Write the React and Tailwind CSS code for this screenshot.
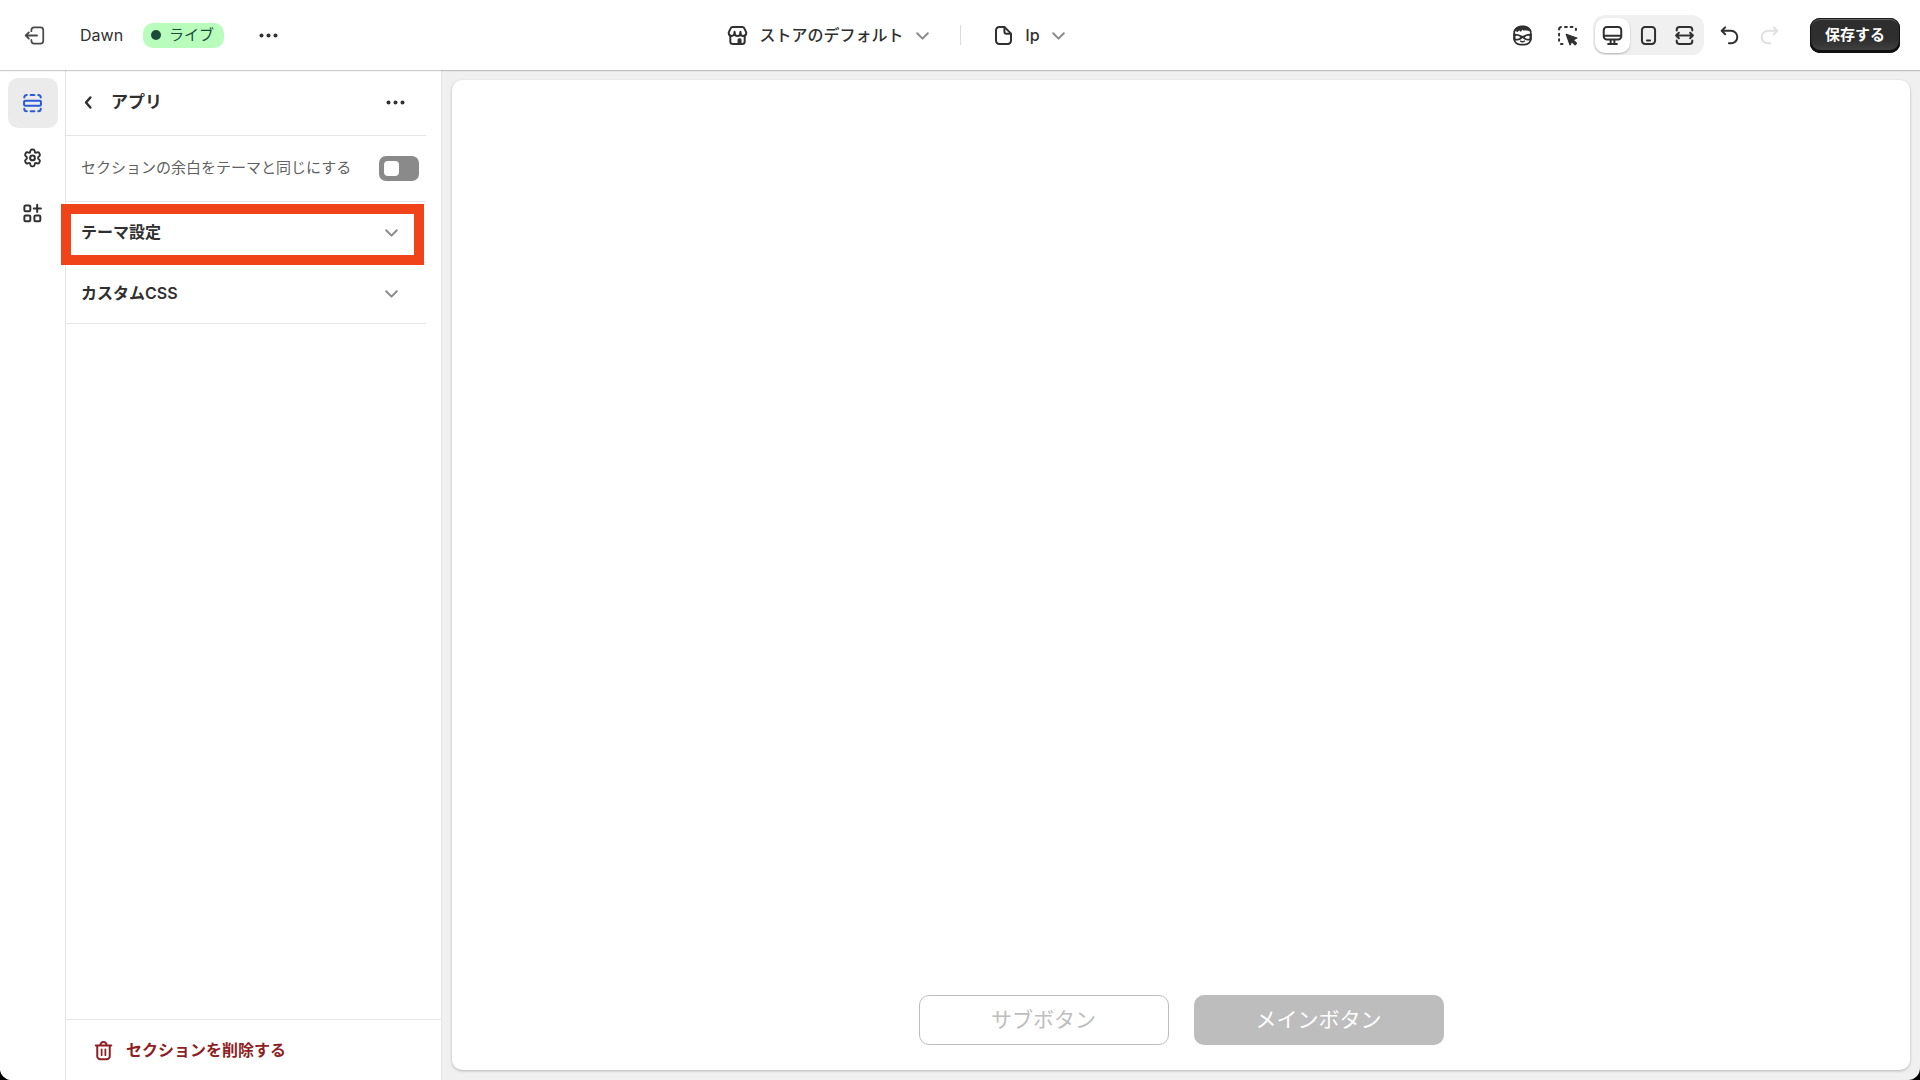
import React, { useState } from 'react';

const Icon = ({ children, className = '' }) => (
    <svg
        viewBox="0 0 20 20"
        className={`w-[25px] h-[25px] shrink-0 ${className}`}
        fill="none"
        stroke="currentColor"
        strokeWidth="1.6"
        strokeLinecap="round"
        strokeLinejoin="round"
        aria-hidden="true"
    >
        {children}
    </svg>
);

const ExitIcon = () => (
    <Icon className="text-[#4a4a4a]">
        <path d="M7.5 6.5V5.75A2.25 2.25 0 0 1 9.750 3.500h5a2.250 2.250 0 0 1 2.250 2.250v8.500a2.250 2.250 0 0 1-2.250 2.250h-5a2.250 2.250 0 0 1-2.250-2.250V13.500" strokeWidth="1.4" />
        <path d="M12 10H3M5.500 7.500 3 10l2.500 2.500" strokeWidth="1.5" />
    </Icon>
);

const DotsIcon = () => (
    <Icon>
        <g fill="currentColor" stroke="none">
            <circle cx="4.400" cy="10" r="1.600" />
            <circle cx="10" cy="10" r="1.600" />
            <circle cx="15.600" cy="10" r="1.600" />
        </g>
    </Icon>
);

const ChevronDown = () => (
    <Icon className="text-[#8a8a8a]">
        <path d="M5.750 8.250 10 12.500l4.250-4.250" />
    </Icon>
);

const ChevronLeft = () => (
    <Icon>
        <path d="M11.500 6 8 10l3.500 4" strokeWidth="2" />
    </Icon>
);

const SectionsIcon = () => (
    <Icon>
        <rect x="3.250" y="7.750" width="13.500" height="4" rx="1" />
        <path d="M3.400 5.250a2 2 0 0 1 2-2M8.500 3.250h3M14.600 3.250a2 2 0 0 1 2 2M3.400 14.250a2 2 0 0 0 2 2M8.500 16.250h3M14.600 16.250a2 2 0 0 0 2-2" />
    </Icon>
);

const GearIcon = () => (
    <Icon>
        <path
            d="M8.300 3.900c.15-.7.650-1.150 1.300-1.150h.8c.65 0 1.150.45 1.300 1.150l.25 1.200c.2.100.4.200.6.350l1.200-.4c.65-.2 1.300.05 1.600.6l.4.700c.35.600.2 1.250-.3 1.700l-.9.850v1.200l.9.850c.5.450.65 1.100.3 1.700l-.4.700c-.3.550-.95.800-1.600.6l-1.200-.4c-.2.150-.4.250-.6.350l-.25 1.200c-.15.700-.65 1.150-1.300 1.150h-.8c-.65 0-1.150-.45-1.300-1.150l-.25-1.200c-.2-.1-.4-.2-.6-.35l-1.200.4c-.65.200-1.300-.05-1.600-.6l-.4-.7c-.35-.6-.2-1.250.3-1.700l.9-.85V8.900l-.9-.85c-.5-.45-.65-1.100-.3-1.700l.4-.7c.3-.55.950-.8 1.600-.6l1.200.4c.2-.15.4-.25.6-.35z"
            strokeWidth="1.500"
        />
        <circle cx="10" cy="9.500" r="1.900" />
    </Icon>
);

const AppsIcon = () => (
    <Icon>
        <rect x="3.500" y="3.500" width="4.750" height="4.750" rx="1" />
        <rect x="3.500" y="11.500" width="4.750" height="4.750" rx="1" />
        <rect x="11.500" y="11.500" width="4.750" height="4.750" rx="1" />
        <path d="M13.750 3v5.750M11 6h5.750" />
    </Icon>
);

const StoreIcon = () => (
    <Icon>
        <path d="M4.250 10v4.750a2 2 0 0 0 2 2h7.500a2 2 0 0 0 2-2V10" />
        <path d="M3 7.500 4.400 4.500A2 2 0 0 1 6.200 3.250h7.600a2 2 0 0 1 1.800 1.250L17 7.500v.5a2.250 2.250 0 0 1-4.650 0 2.350 2.350 0 0 1-4.700 0A2.250 2.250 0 0 1 3 8z" />
        <path d="M7.650 8V7M12.350 8V7" />
        <path d="M10.500 16.500V13.500a.75.75 0 0 1 .75-.75h.75a.75.75 0 0 1 .75.75v3z" fill="currentColor" strokeWidth="1" />
    </Icon>
);

const PageIcon = () => (
    <Icon>
        <path d="M10.750 3.250H6.500a2.500 2.500 0 0 0-2.500 2.500v8.500a2.500 2.500 0 0 0 2.500 2.500h7a2.500 2.500 0 0 0 2.500-2.500V8.500z" />
        <path d="M10.750 3.500V7a1.500 1.500 0 0 0 1.500 1.500H16" />
    </Icon>
);

const HeroIcon = () => (
    <Icon>
        <path d="M3.250 8.500C3.250 5 6 2.750 10 2.750S16.750 5 16.750 8.500v3.750c0 3-2.250 5-5 5h-3.500c-2.750 0-5-2-5-5z" strokeWidth="1.300" />
        <path d="M3 7.250C3.400 4.200 6 2.300 10 2.300s6.500 1.900 7 4.700C15 5.800 13 5.500 10.800 5.700L9.800 5.200 8.600 6.700 7.400 5.500 5.800 7.200 5 6z" fill="currentColor" strokeWidth="0.600" />
        <path d="M2.700 8.300c2.600.2 5 .9 7.300 2 2.300-1.100 4.700-1.800 7.300-2v5.400c-2.700.8-5.400.3-7.300-1.700-1.900 2-4.600 2.500-7.300 1.700z" fill="currentColor" stroke="none" />
        <path d="M4.400 10.300c1.400-.2 2.700.100 3.800 1-1 1.200-2.400 1.600-3.800 1.100zM15.600 10.300c-1.400-.2-2.700.100-3.800 1 1 1.200 2.400 1.600 3.800 1.100z" fill="#fff" stroke="none" />
        <path d="M8.500 14.500c.9.600 2.100.6 3 0" strokeWidth="1.100" />
    </Icon>
);

const InspectIcon = () => (
    <Icon>
        <path d="M3.250 5.250a2 2 0 0 1 1.500-2M8 3.250h1.500M12.500 3.250H14M16.750 4.500v1M3.250 8.500V10M3.250 13v1.250M4.750 16.750H6" />
        <path d="m9 9 8.500 3-3 1.500 2.700 2.700-1.200 1.200-2.700-2.700L12 17.500z" fill="currentColor" strokeWidth="1" />
    </Icon>
);

const DesktopIcon = () => (
    <Icon>
        <rect x="3" y="3.250" width="14" height="10" rx="2.500" />
        <path d="M3.250 10.250h13.500M8.500 13.500v3M11.500 13.500v3M6.500 16.750h7" />
    </Icon>
);

const MobileIcon = () => (
    <Icon>
        <rect x="4.750" y="3.250" width="10.500" height="13.500" rx="2.500" />
        <path d="M8.750 14h2.500" />
    </Icon>
);

const FullWidthIcon = () => (
    <Icon>
        <path d="M3.750 6v-.5A2.250 2.250 0 0 1 6 3.250h8a2.250 2.250 0 0 1 2.250 2.250V6M3.750 14v.5A2.250 2.250 0 0 0 6 16.750h8a2.250 2.250 0 0 0 2.250-2.250V14" />
        <path d="M3.250 10h13.500M5.500 7.750 3.250 10l2.250 2.250M14.500 7.750 16.750 10l-2.250 2.250" />
    </Icon>
);

const UndoIcon = () => (
    <Icon>
        <path d="M6.500 3.500 3.750 6.250l2.750 2.750M4 6.250h7.250a5 5 0 0 1 0 10H9.500" />
    </Icon>
);

const RedoIcon = () => (
    <Icon>
        <path d="m13.500 3.500 2.750 2.750L13.500 9M16 6.250H8.750a5 5 0 0 0 0 10h1.750" />
    </Icon>
);

const TrashIcon = () => (
    <Icon>
        <path d="M3.750 6h12.500M7.500 5.750a2.500 2.500 0 0 1 5 0M5 6.250v8.250a2.500 2.500 0 0 0 2.500 2.500h5a2.500 2.500 0 0 0 2.500-2.500V6.250" />
        <path d="M8.500 9v4.750M11.500 9v4.750" strokeWidth="1.400" />
    </Icon>
);

const railItems = [
    { id: 'sections', label: 'セクション', icon: SectionsIcon },
    { id: 'settings', label: 'テーマ設定', icon: GearIcon },
    { id: 'apps', label: 'アプリ埋め込み', icon: AppsIcon },
];

const devices = [
    { id: 'desktop', label: 'デスクトップ', icon: DesktopIcon },
    { id: 'mobile', label: 'モバイル', icon: MobileIcon },
    { id: 'full', label: '全幅', icon: FullWidthIcon },
];

const TopBar = () => {
    const [device, setDevice] = useState('desktop');

    return (
        <header className="relative z-10 flex h-[70px] shrink-0 items-center justify-between bg-white pl-[22px] pr-5 shadow-[0_1px_1px_rgba(0,0,0,0.2)]">
            <div className="flex items-center pr-1">
                <button type="button" aria-label="終了">
                    <ExitIcon />
                </button>
                <span className="ml-[33px] text-base">Dawn</span>
                <span className="ml-5 flex h-[25px] items-center gap-2 rounded-[10px] bg-[#b9fdbd] pl-2 pr-[10px] text-[15px] text-[#1a4a3c]">
                    <span className="size-[10px] rounded-full bg-[#1a4a3c]" />
                    ライブ
                </span>
                <button type="button" aria-label="その他の操作" className="ml-8">
                    <DotsIcon />
                </button>
            </div>

            <div className="flex items-center text-base font-medium">
                <button type="button" className="flex items-center">
                    <StoreIcon />
                    <span className="ml-[10px] mr-[6px]">ストアのデフォルト</span>
                    <ChevronDown />
                </button>
                <span className="ml-[25px] mr-[30px] h-5 w-px bg-[#dcdcdc]" />
                <button type="button" className="flex items-center">
                    <PageIcon />
                    <span className="ml-[10px] mr-[6px]">lp</span>
                    <ChevronDown />
                </button>
            </div>

            <div className="flex items-center">
                <button type="button" aria-label="Sidekick">
                    <HeroIcon />
                </button>
                <button type="button" aria-label="インスペクター" className="ml-5">
                    <InspectIcon />
                </button>
                <div className="ml-[13px] flex h-10 items-center gap-px rounded-xl bg-[#f0f0f0] px-[2px]">
                    {devices.map(({ id, label, icon: DeviceIcon }) => (
                        <button
                            key={id}
                            type="button"
                            aria-label={label}
                            onClick={() => setDevice(id)}
                            className={`flex size-[35px] items-center justify-center rounded-[10px] ${device === id ? 'bg-white shadow-[0_1px_2px_rgba(0,0,0,0.25)]' : ''}`}
                        >
                            <DeviceIcon />
                        </button>
                    ))}
                </div>
                <button type="button" aria-label="元に戻す" className="ml-[13px]">
                    <UndoIcon />
                </button>
                <button type="button" aria-label="やり直す" disabled className="ml-[15px] text-[#e0e0e0]">
                    <RedoIcon />
                </button>
                <button
                    type="button"
                    className="ml-7 h-[35px] w-[90px] rounded-[10px] bg-linear-to-b from-[#2e2e2e] from-60% to-[#454545] text-[15px] font-semibold text-white shadow-[inset_0_-2px_0_1px_#111,inset_0_0_0_1px_#1c1c1c,inset_0_2px_0_#626262]"
                >
                    保存する
                </button>
            </div>
        </header>
    );
};

const Sidebar = () => {
    const [sameMargin, setSameMargin] = useState(false);

    return (
        <aside className="flex w-[376px] shrink-0 flex-col border-r border-[#e6e6e6] bg-white">
            <div className="mr-[15px] flex h-[66px] items-center justify-between border-b border-[#e6e6e6] pl-[10px] pr-[18px]">
                <div className="flex items-center gap-[10px]">
                    <button type="button" aria-label="戻る">
                        <ChevronLeft />
                    </button>
                    <h1 className="text-[17px] font-semibold">アプリ</h1>
                </div>
                <button type="button" aria-label="セクションの操作">
                    <DotsIcon />
                </button>
            </div>

            <div className="mr-[15px] flex h-[66px] items-center justify-between border-b border-[#e6e6e6] pl-[15px] pr-[7px]">
                <label htmlFor="same-margin" className="text-[15px] text-[#616161]">
                    セクションの余白をテーマと同じにする
                </label>
                <input
                    id="same-margin"
                    type="checkbox"
                    role="switch"
                    checked={sameMargin}
                    onChange={(e) => setSameMargin(e.target.checked)}
                    className="flex h-[25px] w-10 shrink-0 appearance-none items-center rounded-[7px] bg-[#8a8a8a] px-[5px] before:size-[15px] before:rounded before:bg-white before:content-[''] checked:justify-end checked:bg-[#303030]"
                />
            </div>

            <div className="relative mr-[15px] border-b border-[#e6e6e6]">
                <button type="button" className="flex h-[60px] w-full items-center justify-between pl-[15px] pr-[22px] text-base font-semibold">
                    テーマ設定
                    <ChevronDown />
                </button>
                {/* highlight frame */}
                <div className="pointer-events-none absolute -bottom-[3px] -left-[5px] right-[2px] top-[2px] border-[10px] border-[#f0431a]" />
            </div>

            <div className="mr-[15px] border-b border-[#e6e6e6]">
                <button type="button" className="flex h-[60px] w-full items-center justify-between pl-[15px] pr-[22px] text-base font-semibold">
                    カスタムCSS
                    <ChevronDown />
                </button>
            </div>

            <div className="mt-auto border-t border-[#e6e6e6]">
                <button type="button" className="flex h-[60px] w-full items-center gap-[10px] pl-[25px] text-base font-semibold text-[#8e1f24]">
                    <TrashIcon />
                    セクションを削除する
                </button>
            </div>
        </aside>
    );
};

const App = () => {
    const [tab, setTab] = useState('sections');

    return (
        <div className="bg-black">
            <div className="flex h-screen flex-col overflow-hidden rounded-b-[12px] bg-[#f0f0f0] font-['Inter','Noto_Sans_CJK_JP',sans-serif] text-[#303030]">
                <TopBar />
                <div className="flex min-h-0 flex-1">
                    <nav className="flex w-[66px] shrink-0 flex-col gap-[5px] border-r border-[#e6e6e6] bg-white pl-2 pt-2">
                        {railItems.map(({ id, label, icon: RailIcon }) => (
                            <button
                                key={id}
                                type="button"
                                aria-label={label}
                                onClick={() => setTab(id)}
                                className={`flex size-[50px] items-center rounded-[10px] pl-3 ${tab === id ? 'bg-[#ebebeb] text-[#2a5bd7]' : ''}`}
                            >
                                <RailIcon />
                            </button>
                        ))}
                    </nav>
                    <Sidebar />
                    <main className="flex flex-1 p-[10px]">
                        <div className="flex flex-1 items-end justify-center gap-[25px] rounded-[10px] bg-white pb-[25px] shadow-[0_1px_3px_rgba(0,0,0,0.25)]">
                            <button type="button" className="h-[50px] w-[250px] rounded-[10px] border border-[#bdbdbd] text-[21px] text-[#bdbdbd]">
                                サブボタン
                            </button>
                            <button type="button" className="h-[50px] w-[250px] rounded-[10px] bg-[#bdbdbd] text-[21px] text-white">
                                メインボタン
                            </button>
                        </div>
                    </main>
                </div>
            </div>
        </div>
    );
};

export default App;
